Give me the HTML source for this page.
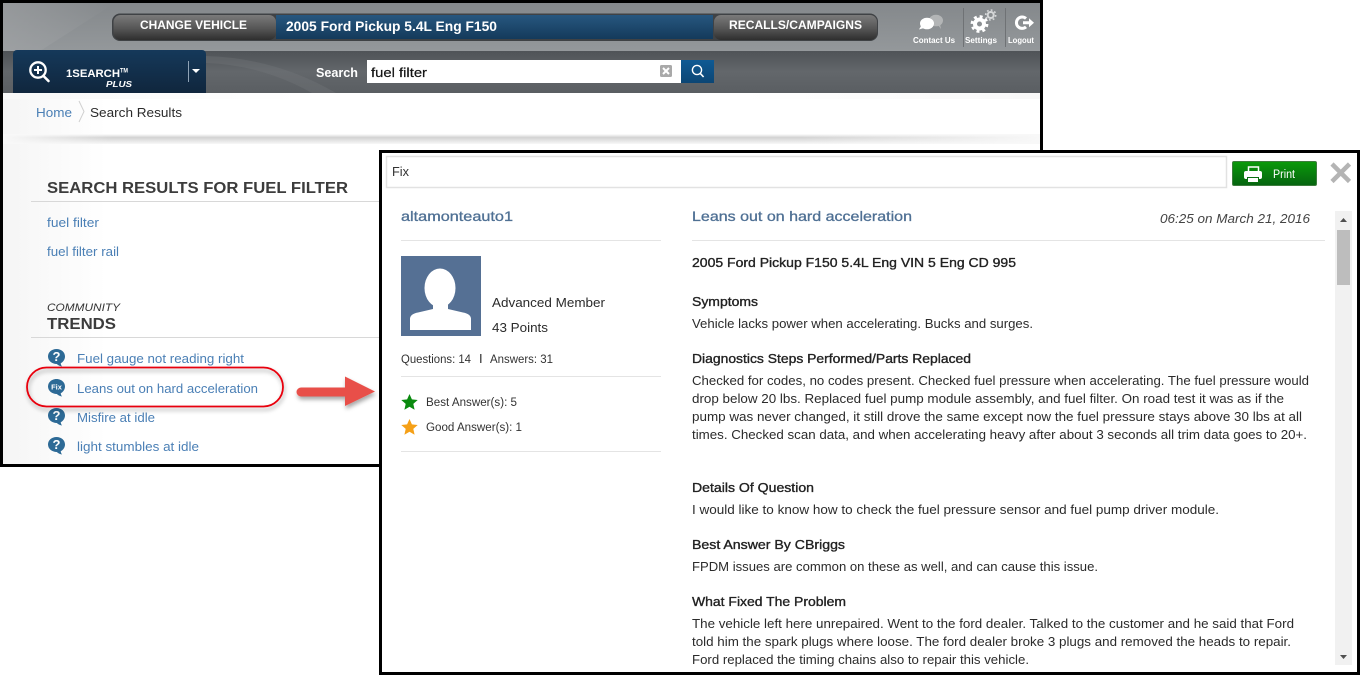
<!DOCTYPE html>
<html lang="en"><head><meta charset="utf-8"><title>Search Results</title>
<style>
html,body{margin:0;padding:0;background:#fff;width:1360px;height:675px;overflow:hidden}
svg{display:block;font-family:"Liberation Sans",Arial,sans-serif}
.body{font-size:13px;fill:#2b2b2b}
.hd{font-size:13px;fill:#222;stroke:#222;stroke-width:.35px}
.link{font-size:13px;fill:#4a7fb5}
.wb{font-weight:bold;fill:#fff}
</style></head><body>
<svg width="1360" height="675" viewBox="0 0 1360 675" xmlns="http://www.w3.org/2000/svg">
<defs>
<linearGradient id="top" x1="0" x2="0" y1="0" y2="1"><stop offset="0" stop-color="#84888b"/><stop offset="1" stop-color="#94989b"/></linearGradient>
<linearGradient id="low" x1="0" x2="0" y1="0" y2="1"><stop offset="0" stop-color="#4f5357"/><stop offset=".5" stop-color="#63676b"/><stop offset="1" stop-color="#5a5e62"/></linearGradient>
<linearGradient id="btn" x1="0" x2="0" y1="0" y2="1"><stop offset="0" stop-color="#7a7a7a"/><stop offset=".55" stop-color="#555"/><stop offset="1" stop-color="#2e2e2e"/></linearGradient>
<linearGradient id="blue" x1="0" x2="0" y1="0" y2="1"><stop offset="0" stop-color="#27577f"/><stop offset="1" stop-color="#143a5b"/></linearGradient>
<linearGradient id="navy" x1="0" x2="0" y1="0" y2="1"><stop offset="0" stop-color="#15395a"/><stop offset="1" stop-color="#10263d"/></linearGradient>
<linearGradient id="sb" x1="0" x2="0" y1="0" y2="1"><stop offset="0" stop-color="#0f5a94"/><stop offset="1" stop-color="#0c4674"/></linearGradient>
<linearGradient id="grn" x1="0" x2="0" y1="0" y2="1"><stop offset="0" stop-color="#0a9a0a"/><stop offset="1" stop-color="#066410"/></linearGradient>
<linearGradient id="sh" x1="0" x2="0" y1="0" y2="1"><stop offset="0" stop-color="#fff"/><stop offset=".35" stop-color="#d2d2d2"/><stop offset="1" stop-color="#f8f8f8"/></linearGradient>
<linearGradient id="fadeh" x1="0" x2="1" y1="0" y2="0"><stop offset="0" stop-color="#f5f5f5"/><stop offset=".1" stop-color="#fff"/></linearGradient>
<linearGradient id="bandl" x1="0" x2="1" y1="0" y2="0"><stop offset="0" stop-color="#f8f8f8"/><stop offset="1" stop-color="#f8f8f8" stop-opacity="0"/></linearGradient>
<linearGradient id="bandr" x1="0" x2="1" y1="0" y2="0"><stop offset="0" stop-color="#f8f8f8" stop-opacity="0"/><stop offset="1" stop-color="#f8f8f8"/></linearGradient>
<linearGradient id="sw" x1="0" x2="1" y1="0" y2="0"><stop offset="0" stop-color="#a6a8aa"/><stop offset="1" stop-color="#a6a8aa" stop-opacity="0"/></linearGradient>
<filter id="ds" x="-10%" y="-30%" width="120%" height="170%"><feDropShadow dx="1" dy="3" stdDeviation="2" flood-color="#000" flood-opacity=".35"/></filter>
<path id="q" d="M56.500 0c4.800 0 8.500 3.300 8.500 7.500c0 3-1.900 5.500-4.300 6.700q.2 1.800 1.300 3.300q-3.200-.5-5.200-2.500c-4.800 0-8.800-3.300-8.800-7.500s3.700-7.500 8.500-7.500z"/>
</defs>

<!-- main page frame -->
<rect x="0" y="0" width="1043" height="467" fill="#000"/>
<rect x="3" y="3" width="1037" height="461" fill="url(#fadeh)"/>
<rect x="3" y="3" width="1037" height="48" fill="url(#top)"/>
<path d="M3 3H115L40 51H3z" fill="url(#sw)" opacity=".5"/>
<rect x="3" y="51" width="1037" height="42" fill="url(#low)"/>
<path d="M206 56q70 2 130 37h-24q-50-28-106-30z" fill="#7a7d80" opacity=".28"/>

<!-- vehicle bar -->
<rect x="112" y="13.500" width="766" height="27.500" rx="8" fill="#3f4245"/>
<rect x="113.500" y="15" width="162.500" height="25" rx="7" fill="url(#btn)"/>
<rect x="714" y="15" width="163" height="25" rx="7" fill="url(#btn)"/>
<rect x="276" y="15" width="437" height="24" fill="url(#blue)"/>
<text x="140" y="29" class="wb" font-size="12" textLength="107" lengthAdjust="spacingAndGlyphs">CHANGE VEHICLE</text>
<text x="286" y="31" class="wb" font-size="13.500" textLength="211" lengthAdjust="spacingAndGlyphs">2005 Ford Pickup 5.4L Eng F150</text>
<text x="729" y="29" class="wb" font-size="12" textLength="133" lengthAdjust="spacingAndGlyphs">RECALLS/CAMPAIGNS</text>

<!-- top icons -->
<rect x="963" y="8" width="1" height="39" fill="#6f7275"/>
<rect x="1005" y="8" width="1" height="39" fill="#6f7275"/>
<ellipse cx="936" cy="20.500" rx="7" ry="5.800" fill="#b3b5b6"/>
<path d="M938 25l3 4-1-5z" fill="#b3b5b6"/>
<ellipse cx="927" cy="23.500" rx="7" ry="5.800" fill="#fff"/>
<path d="M921 26l-2 3.500 5-1.500z" fill="#fff"/>
<g fill="none" stroke="#fff">
<circle cx="979.500" cy="24" r="4.500" stroke-width="4"/>
<circle cx="979.500" cy="24" r="7.400" stroke-width="3" stroke-dasharray="2.900 2.900"/>
<circle cx="990.700" cy="15" r="3" stroke="#d6d8d9" stroke-width="2"/>
<circle cx="990.700" cy="15" r="5" stroke="#d6d8d9" stroke-width="1.600" stroke-dasharray="1.800 2.100"/>
<path d="M1026 18.500a5.700 5.700 0 1 0 0 8.400" stroke-width="3"/>
</g>
<path d="M1023 21.200h6v-3l5 4.500-5 4.500v-3h-6z" fill="#fff"/>
<text x="913" y="43" class="wb" font-size="8" textLength="42" lengthAdjust="spacingAndGlyphs">Contact Us</text>
<text x="965" y="43" class="wb" font-size="8" textLength="32" lengthAdjust="spacingAndGlyphs">Settings</text>
<text x="1008" y="43" class="wb" font-size="8" textLength="26" lengthAdjust="spacingAndGlyphs">Logout</text>

<!-- 1search -->
<path d="M13 54a4 4 0 0 1 4-4H202a4 4 0 0 1 4 4V93H13z" fill="url(#navy)"/>
<circle cx="38" cy="70" r="7.700" fill="none" stroke="#fff" stroke-width="2.300"/>
<path d="M43.500 76l5 5" stroke="#fff" stroke-width="2.600" stroke-linecap="round"/>
<path d="M34 70h8M38 66v8" stroke="#fff" stroke-width="2"/>
<text x="66" y="77" class="wb" font-size="11" textLength="54" lengthAdjust="spacingAndGlyphs">1SEARCH</text>
<text x="120" y="72.500" class="wb" font-size="6" textLength="8" lengthAdjust="spacingAndGlyphs">TM</text>
<text x="106" y="87" class="wb" font-size="8" font-style="italic" textLength="26" lengthAdjust="spacingAndGlyphs">PLUS</text>
<rect x="188" y="61" width="1" height="21" fill="#8fa3b6"/>
<path d="M192 69h8l-4 4z" fill="#fff"/>

<!-- search -->
<text x="316" y="77" class="wb" font-size="13" textLength="42" lengthAdjust="spacingAndGlyphs">Search</text>
<rect x="367" y="60" width="314" height="23" fill="#fff"/>
<text x="371" y="77" font-size="13" fill="#111" stroke="#111" stroke-width=".2" textLength="56" lengthAdjust="spacingAndGlyphs">fuel filter</text>
<rect x="660" y="65" width="12" height="12" rx="1.500" fill="#a9a9a9"/>
<path d="M663 68l6 6M669 68l-6 6" stroke="#fff" stroke-width="2"/>
<rect x="681" y="60" width="33" height="23" fill="url(#sb)"/>
<circle cx="697" cy="70" r="4.600" fill="none" stroke="#fff" stroke-width="1.400"/>
<path d="M700.400 73.600l3.200 3.400" stroke="#fff" stroke-width="1.600"/>

<!-- breadcrumb -->
<rect x="3" y="93" width="300" height="6" fill="url(#bandl)"/>
<rect x="740" y="93" width="300" height="6" fill="url(#bandr)"/>
<text x="36" y="117" class="link" fill="#3f7ab5" textLength="36" lengthAdjust="spacingAndGlyphs">Home</text>
<path d="M79 101l5 10.500-5 10.500" fill="none" stroke="#d0d0d0"/>
<text x="90" y="117" class="body" fill="#222" textLength="92" lengthAdjust="spacingAndGlyphs">Search Results</text>
<rect x="3" y="134" width="1037" height="10" fill="url(#sh)"/>
<rect x="3" y="134" width="110" height="10" fill="url(#bandl)"/>
<rect x="800" y="134" width="240" height="10" fill="url(#bandr)"/>

<!-- results -->
<text x="47" y="193" font-size="15.500" font-weight="bold" fill="#3c3c3c" textLength="301" lengthAdjust="spacingAndGlyphs">SEARCH RESULTS FOR FUEL FILTER</text>
<rect x="31" y="201" width="349" height="1" fill="#d8d8d8"/>
<text x="47" y="227" class="link" textLength="52" lengthAdjust="spacingAndGlyphs">fuel filter</text>
<text x="47" y="256" class="link" textLength="72" lengthAdjust="spacingAndGlyphs">fuel filter rail</text>
<text x="47" y="311" font-size="11" font-style="italic" fill="#333" textLength="73" lengthAdjust="spacingAndGlyphs">COMMUNITY</text>
<text x="47" y="329" font-size="16" font-weight="bold" fill="#3c3c3c" textLength="69" lengthAdjust="spacingAndGlyphs">TRENDS</text>
<rect x="31" y="337" width="349" height="1" fill="#d8d8d8"/>

<g fill="#2d6a96">
<use href="#q" y="349"/><use href="#q" y="379"/><use href="#q" y="408"/><use href="#q" y="437"/>
</g>
<g fill="#fff" font-weight="bold" text-anchor="middle">
<text x="56.500" y="361" font-size="13">?</text>
<text x="56.500" y="389.500" font-size="7.500">Fix</text>
<text x="56.500" y="420" font-size="13">?</text>
<text x="56.500" y="449" font-size="13">?</text>
</g>
<text x="77" y="363" class="link" textLength="167" lengthAdjust="spacingAndGlyphs">Fuel gauge not reading right</text>
<text x="77" y="393" class="link" textLength="181" lengthAdjust="spacingAndGlyphs">Leans out on hard acceleration</text>
<text x="77" y="422" class="link" textLength="78" lengthAdjust="spacingAndGlyphs">Misfire at idle</text>
<text x="77" y="451" class="link" textLength="122" lengthAdjust="spacingAndGlyphs">light stumbles at idle</text>

<rect x="27" y="367.500" width="256" height="39" rx="19.500" fill="none" stroke="#e8000c" stroke-width="1.800" filter="url(#ds)"/>
<path d="M301 387.500H345V376.500L375 391.500L345 406V396.500H301a4.500 4.500 0 0 1 0-9z" fill="#e8504a" filter="url(#ds)"/>

<!-- modal -->
<rect x="379" y="150" width="981" height="525" fill="#000"/>
<rect x="382" y="153" width="975" height="519" fill="#fff"/>
<rect x="386.500" y="156.500" width="840" height="31" fill="#fff" stroke="#e2e2e2" stroke-width="1.500"/>
<text x="392" y="176" font-size="13" fill="#333" textLength="17" lengthAdjust="spacingAndGlyphs">Fix</text>

<rect x="1232.500" y="161.500" width="84" height="24" rx="1.500" fill="url(#grn)" stroke="#3d7d3d"/>
<path d="M1248.500 172v-5h10v5" fill="none" stroke="#fff" stroke-width="1.500"/>
<rect x="1244" y="171" width="18" height="8" rx="2" fill="#fff"/>
<rect x="1247.500" y="177.500" width="11" height="5" fill="#fff" stroke="#0a6e10"/>
<text x="1273" y="178" font-size="11.500" fill="#fff" textLength="22" lengthAdjust="spacingAndGlyphs">Print</text>
<path d="M1332 164l17.500 17.500M1349.500 164l-17.500 17.500" stroke="#b4b4b4" stroke-width="4.500"/>

<!-- left col -->
<text x="401" y="221" font-size="14" fill="#4f7094" stroke="#4f7094" stroke-width=".3" textLength="112" lengthAdjust="spacingAndGlyphs">altamonteauto1</text>
<rect x="401" y="240" width="260" height="1" fill="#e4e4e4"/>
<rect x="401" y="256" width="80" height="80" fill="#557094"/>
<ellipse cx="440" cy="288" rx="15.500" ry="19.500" fill="#fff"/>
<path d="M410 330v-11q0-5 8-6.500l15-3.500v-5h15v5l15 3.500q8 1.500 8 6.500v11z" fill="#fff"/>
<text x="492" y="307" class="body" textLength="113" lengthAdjust="spacingAndGlyphs">Advanced Member</text>
<text x="492" y="332" class="body" textLength="56" lengthAdjust="spacingAndGlyphs">43  Points</text>
<text x="401" y="363" font-size="11.500" fill="#333" textLength="70" lengthAdjust="spacingAndGlyphs">Questions: 14</text>
<rect x="480" y="354" width="1.500" height="9" fill="#555"/>
<text x="490" y="363" font-size="11.500" fill="#333" textLength="63" lengthAdjust="spacingAndGlyphs">Answers: 31</text>
<rect x="401" y="376" width="260" height="1" fill="#e4e4e4"/>
<path d="M409.500 394l2.400 5.400 5.800.6-4.400 3.900 1.300 5.800-5.100-3-5.100 3 1.300-5.800-4.400-3.900 5.800-.6z" fill="#0a8a0f"/>
<path d="M409.500 419l2.400 5.400 5.800.6-4.400 3.900 1.300 5.800-5.100-3-5.100 3 1.300-5.800-4.400-3.900 5.800-.6z" fill="#f5a017"/>
<text x="426" y="406" font-size="11.500" fill="#333" textLength="91" lengthAdjust="spacingAndGlyphs">Best Answer(s): 5</text>
<text x="426" y="431" font-size="11.500" fill="#333" textLength="96" lengthAdjust="spacingAndGlyphs">Good Answer(s): 1</text>
<rect x="401" y="451" width="260" height="1" fill="#e4e4e4"/>

<!-- right col -->
<text x="692" y="221" font-size="14" fill="#4f7094" stroke="#4f7094" stroke-width=".3" textLength="220" lengthAdjust="spacingAndGlyphs">Leans out on hard acceleration</text>
<text x="1160" y="223" font-size="13" font-style="italic" fill="#444" textLength="150" lengthAdjust="spacingAndGlyphs">06:25 on March 21, 2016</text>
<rect x="692" y="240" width="633" height="1" fill="#e4e4e4"/>

<text x="692" y="267" class="hd" textLength="324" lengthAdjust="spacingAndGlyphs">2005 Ford Pickup F150 5.4L Eng VIN 5 Eng CD 995</text>
<text x="692" y="306" class="hd" textLength="66" lengthAdjust="spacingAndGlyphs">Symptoms</text>
<text x="692" y="328" class="body" textLength="341" lengthAdjust="spacingAndGlyphs">Vehicle lacks power when accelerating. Bucks and surges.</text>
<text x="692" y="363" class="hd" textLength="279" lengthAdjust="spacingAndGlyphs">Diagnostics Steps Performed/Parts Replaced</text>
<text x="692" y="385" class="body" textLength="617" lengthAdjust="spacingAndGlyphs">Checked for codes, no codes present. Checked fuel pressure when accelerating. The fuel pressure would</text>
<text x="692" y="403" class="body" textLength="592" lengthAdjust="spacingAndGlyphs">drop below 20 lbs. Replaced fuel pump module assembly, and fuel filter. On road test it was as if the</text>
<text x="692" y="421" class="body" textLength="610" lengthAdjust="spacingAndGlyphs">pump was never changed, it still drove the same except now the fuel pressure stays above 30 lbs at all</text>
<text x="692" y="439" class="body" textLength="615" lengthAdjust="spacingAndGlyphs">times. Checked scan data, and when accelerating heavy after about 3 seconds all trim data goes to 20+.</text>
<text x="692" y="492" class="hd" textLength="122" lengthAdjust="spacingAndGlyphs">Details Of Question</text>
<text x="692" y="514" class="body" textLength="527" lengthAdjust="spacingAndGlyphs">I would like to know how to check the fuel pressure sensor and fuel pump driver module.</text>
<text x="692" y="549" class="hd" textLength="153" lengthAdjust="spacingAndGlyphs">Best Answer By CBriggs</text>
<text x="692" y="571" class="body" textLength="406" lengthAdjust="spacingAndGlyphs">FPDM issues are common on these as well, and can cause this issue.</text>
<text x="692" y="606" class="hd" textLength="154" lengthAdjust="spacingAndGlyphs">What Fixed The Problem</text>
<text x="692" y="628" class="body" textLength="602" lengthAdjust="spacingAndGlyphs">The vehicle left here unrepaired. Went to the ford dealer. Talked to the customer and he said that Ford</text>
<text x="692" y="646" class="body" textLength="599" lengthAdjust="spacingAndGlyphs">told him the spark plugs where loose. The ford dealer broke 3 plugs and removed the heads to repair.</text>
<text x="692" y="664" class="body" textLength="337" lengthAdjust="spacingAndGlyphs">Ford replaced the timing chains also to repair this vehicle.</text>

<!-- scrollbar -->
<rect x="1335" y="211" width="17" height="454" fill="#f1f1f1"/>
<rect x="1337" y="230" width="13" height="55" fill="#bdbdbd"/>
<path d="M1340 222h7l-3.500-4z" fill="#505050"/>
<path d="M1340 655h7l-3.500 4z" fill="#505050"/>
</svg>
</body></html>
